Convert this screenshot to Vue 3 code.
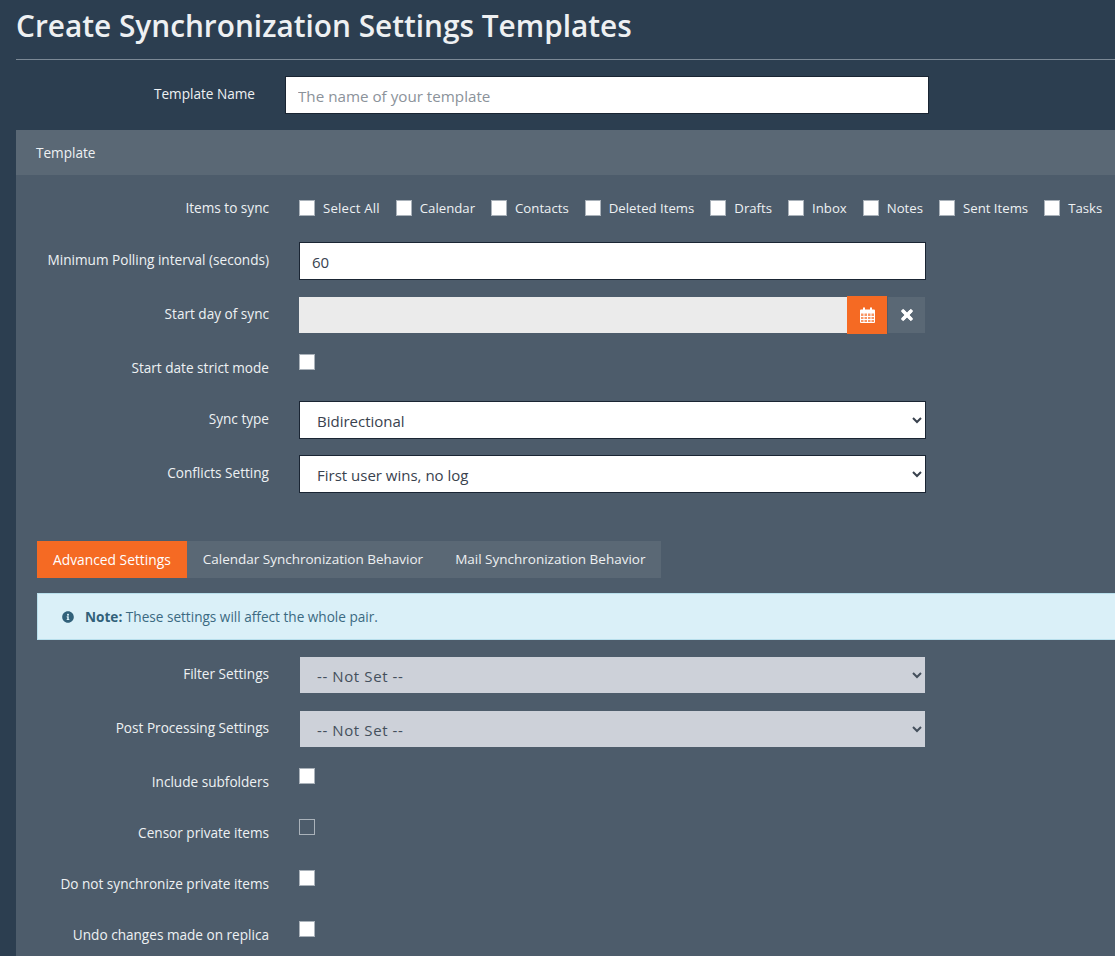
<template>
  <div class="page">
    <h1 class="title">Create Synchronization Settings Templates</h1>
    <hr class="divider" />

    <div class="name-row">
      <label class="name-label">Template Name</label>
      <input class="name-input" type="text" placeholder="The name of your template" />
    </div>

    <section class="panel">
      <div class="panel-head">Template</div>
      <div class="panel-body">
        <!-- 同步项目 -->
        <div class="form-row items-row">
          <label class="row-label">Items to sync</label>
          <div class="items">
            <label v-for="item in syncItems" :key="item" class="item">
              <input type="checkbox" class="check" />
              <span>{{ item }}</span>
            </label>
          </div>
        </div>

        <div class="form-row">
          <label class="row-label">Minimum Polling interval (seconds)</label>
          <input class="control" type="text" value="60" />
        </div>

        <div class="form-row">
          <label class="row-label">Start day of sync</label>
          <div class="date-group">
            <input class="date-input" type="text" disabled />
            <button class="btn-cal" type="button">
              <svg class="ico-cal" viewBox="0 0 15 16" width="15" height="16">
                <path fill="#fff" d="M1 2.400h2V1.300a1 1 0 0 1 2 0v1.100h5V1.300a1 1 0 0 1 2 0v1.100h2a1 1 0 0 1 1 1V15a1 1 0 0 1-1 1H1a1 1 0 0 1-1-1V3.400a1 1 0 0 1 1-1z" />
                <path fill="#f56a23" opacity="0.7" d="M1 6.500V9h2.500V6.500zM4.500 6.500V9H7V6.500zM8 6.500V9h2.500V6.500zM11.500 6.500V9H14V6.500zM1 10v2h2.500v-2zM4.500 10v2H7v-2zM8 10v2h2.500v-2zM11.500 10v2H14v-2zM1 13v2h2.500v-2zM4.500 13v2H7v-2zM8 13v2h2.500v-2zM11.500 13v2H14v-2z" />
              </svg>
            </button>
            <button class="btn-clear" type="button">
              <svg viewBox="0 0 352 512" width="12" height="16">
                <path fill="#fff" stroke="#fff" stroke-width="30" d="M242.720 256l100.070-100.070c12.280-12.280 12.280-32.190 0-44.480l-22.240-22.240c-12.280-12.280-32.190-12.280-44.480 0L176 189.280 75.930 89.210c-12.280-12.280-32.190-12.280-44.480 0L9.210 111.450c-12.280 12.280-12.280 32.190 0 44.480L109.280 256 9.210 356.070c-12.280 12.280-12.280 32.190 0 44.480l22.240 22.240c12.280 12.280 32.200 12.280 44.480 0L176 322.720l100.070 100.070c12.280 12.280 32.200 12.280 44.480 0l22.240-22.240c12.280-12.280 12.280-32.190 0-44.480L242.720 256z" />
              </svg>
            </button>
          </div>
        </div>

        <div class="form-row check-row strict-row">
          <label class="row-label">Start date strict mode</label>
          <input type="checkbox" class="check" />
        </div>

        <div class="form-row">
          <label class="row-label">Sync type</label>
          <select class="control">
            <option>Bidirectional</option>
          </select>
        </div>

        <div class="form-row">
          <label class="row-label">Conflicts Setting</label>
          <select class="control">
            <option>First user wins, no log</option>
          </select>
        </div>

        <div class="tabs">
          <a
            v-for="(tab, i) in tabs"
            :key="tab"
            href="javascript:;"
            class="tab"
            :class="{ active: i === 0 }"
          >{{ tab }}</a>
        </div>

        <div class="note">
          <svg class="ico-info" viewBox="0 0 512 512" width="12" height="12">
            <path fill="#31617a" d="M256 8C119.043 8 8 119.083 8 256c0 136.997 111.043 248 248 248s248-111.003 248-248C504 119.083 392.957 8 256 8zm0 110c23.196 0 42 18.804 42 42s-18.804 42-42 42-42-18.804-42-42 18.804-42 42-42zm56 254c0 6.627-5.373 12-12 12h-88c-6.627 0-12-5.373-12-12v-24c0-6.627 5.373-12 12-12h12v-64h-12c-6.627 0-12-5.373-12-12v-24c0-6.627 5.373-12 12-12h64c6.627 0 12 5.373 12 12v100h12c6.627 0 12 5.373 12 12v24z" />
          </svg>
          <span><b>Note:</b> These settings will affect the whole pair.</span>
        </div>

        <div class="form-row compact">
          <label class="row-label">Filter Settings</label>
          <select class="control grey">
            <option>-- Not Set --</option>
          </select>
        </div>

        <div class="form-row compact">
          <label class="row-label">Post Processing Settings</label>
          <select class="control grey">
            <option>-- Not Set --</option>
          </select>
        </div>

        <div
          v-for="opt in options"
          :key="opt.label"
          class="form-row check-row opt-row"
        >
          <label class="row-label">{{ opt.label }}</label>
          <input type="checkbox" class="check" :class="{ off: opt.off }" />
        </div>
      </div>
    </section>
  </div>
</template>

<script setup>
const syncItems = ['Select All', 'Calendar', 'Contacts', 'Deleted Items', 'Drafts', 'Inbox', 'Notes', 'Sent Items', 'Tasks'];

const tabs = ['Advanced Settings', 'Calendar Synchronization Behavior', 'Mail Synchronization Behavior'];

const options = [
  { label: 'Include subfolders' },
  { label: 'Censor private items', off: true },
  { label: 'Do not synchronize private items' },
  { label: 'Undo changes made on replica' }
];
</script>

<style>
html,
body {
  margin: 0;
  background: #2c3e50;
  overflow: hidden;
}
</style>

<style scoped>
.page {
  width: 1115px;
  height: 956px;
  overflow: hidden;
  box-sizing: border-box;
  padding-left: 16px;
  background: #2c3e50;
  font-family: "Open Sans", "Noto Sans", sans-serif;
  font-size: 13.6px;
  color: #eef1f3;
}

.title {
  margin: 0;
  padding-top: 6px;
  height: 59px;
  box-sizing: border-box;
  font-size: 29.8px;
  line-height: 40px;
  font-weight: 600;
  color: #eef0f2;
}

.divider {
  margin: 0;
  border: 0;
  border-top: 1px solid #7b8895;
}

.name-row {
  display: grid;
  grid-template-columns: 239px 644px;
  column-gap: 30px;
  margin-top: 16px;
  height: 38px;
}

.name-label {
  text-align: right;
  line-height: 36px;
}

.name-input {
  box-sizing: border-box;
  height: 38px;
  padding: 2px 12px 0;
  border: 1px solid #1a2533;
  background: #fff;
  font: inherit;
  font-size: 15.200px;
  color: #333;
}

.name-input::placeholder {
  color: #8b929a;
}

.panel {
  margin-top: 16px;
  width: 1120px;
}

.panel-head {
  height: 45px;
  padding-left: 20px;
  background: #5a6875;
  line-height: 46px;
}

.panel-body {
  height: 800px;
  padding-left: 21px;
  background: #4d5c6b;
}

.form-row {
  display: grid;
  grid-template-columns: 232px 627px;
  column-gap: 30px;
  height: 38px;
  margin-bottom: 16px;
  margin-left: -21px;
  padding-left: 21px;
}

.row-label {
  text-align: right;
  line-height: 36px;
  white-space: nowrap;
}

.items-row {
  grid-template-columns: 232px auto;
  margin-bottom: 0;
  padding-top: 25px;
  height: 42px;
}

.items-row .row-label {
  line-height: 16px;
}

.items {
  display: flex;
  height: 16px;
  gap: 16px;
  font-size: 13.200px;
}

.item {
  display: flex;
  align-items: center;
  gap: 8px;
  white-space: nowrap;
}

.item:first-child {
  letter-spacing: 0.2px;
}

.check {
  appearance: none;
  box-sizing: border-box;
  width: 16px;
  height: 16px;
  margin: 0;
  flex: none;
  border: 1px solid #aab2ba;
  background: #fff;
}

.check.off {
  background: transparent;
}

.control {
  box-sizing: border-box;
  width: 627px;
  height: 38px;
  padding: 2px 13px 0 12px;
  border: 1px solid #1a2533;
  background: #fff;
  font: inherit;
  font-size: 15px;
  color: #39424e;
}

select.control {
  padding-left: 13px;
}

.control.grey {
  height: 36px;
  margin-left: 1px;
  width: 625px;
  border: 0;
  background: #cdd1d9;
  color: #444f5c;
  letter-spacing: 0.6px;
}

.date-group {
  display: flex;
  align-items: center;
  width: 626px;
}

.date-input {
  box-sizing: border-box;
  flex: 1;
  min-width: 0;
  height: 36px;
  border: 0;
  background: #ebebeb;
}

.btn-cal,
.btn-clear {
  display: flex;
  align-items: center;
  justify-content: center;
  padding: 0;
  border: 0;
}

.btn-cal {
  width: 40px;
  height: 38px;
  background: #f56a23;
}

.btn-clear {
  width: 37px;
  height: 36px;
  margin-left: 1px;
  background: #5a6875;
}

.check-row .row-label {
  line-height: 16px;
}

.strict-row {
  height: 16px;
  margin-top: 20px;
  margin-bottom: 31px;
}

.strict-row .row-label {
  margin-top: 6px;
}

.tabs {
  display: inline-flex;
  margin-top: 32px;
  background: #5a6875;
  font-size: 13.500px;
}

.tab {
  height: 37px;
  padding: 0 16px;
  line-height: 37px;
  text-decoration: none;
  color: #eef0f2;
}

.tab.active {
  background: #f56a23;
  color: #fff;
  font-size: 13.800px;
}

.note {
  display: flex;
  align-items: center;
  gap: 11px;
  box-sizing: border-box;
  height: 47px;
  margin-top: 15px;
  margin-bottom: 17px;
  padding-left: 24px;
  border: 1px solid #b8dfec;
  background: #daf0f8;
  color: #3b6a82;
}

.note b {
  font-weight: 700;
  color: #31617a;
}

.compact {
  height: 36px;
  margin-bottom: 18px;
}

.compact .row-label {
  line-height: 34px;
}

.opt-row {
  height: 16px;
  margin-top: 0;
  margin-bottom: 35px;
}

.opt-row .row-label {
  margin-top: 6px;
}

.compact + .opt-row {
  margin-top: 21px;
}
</style>
